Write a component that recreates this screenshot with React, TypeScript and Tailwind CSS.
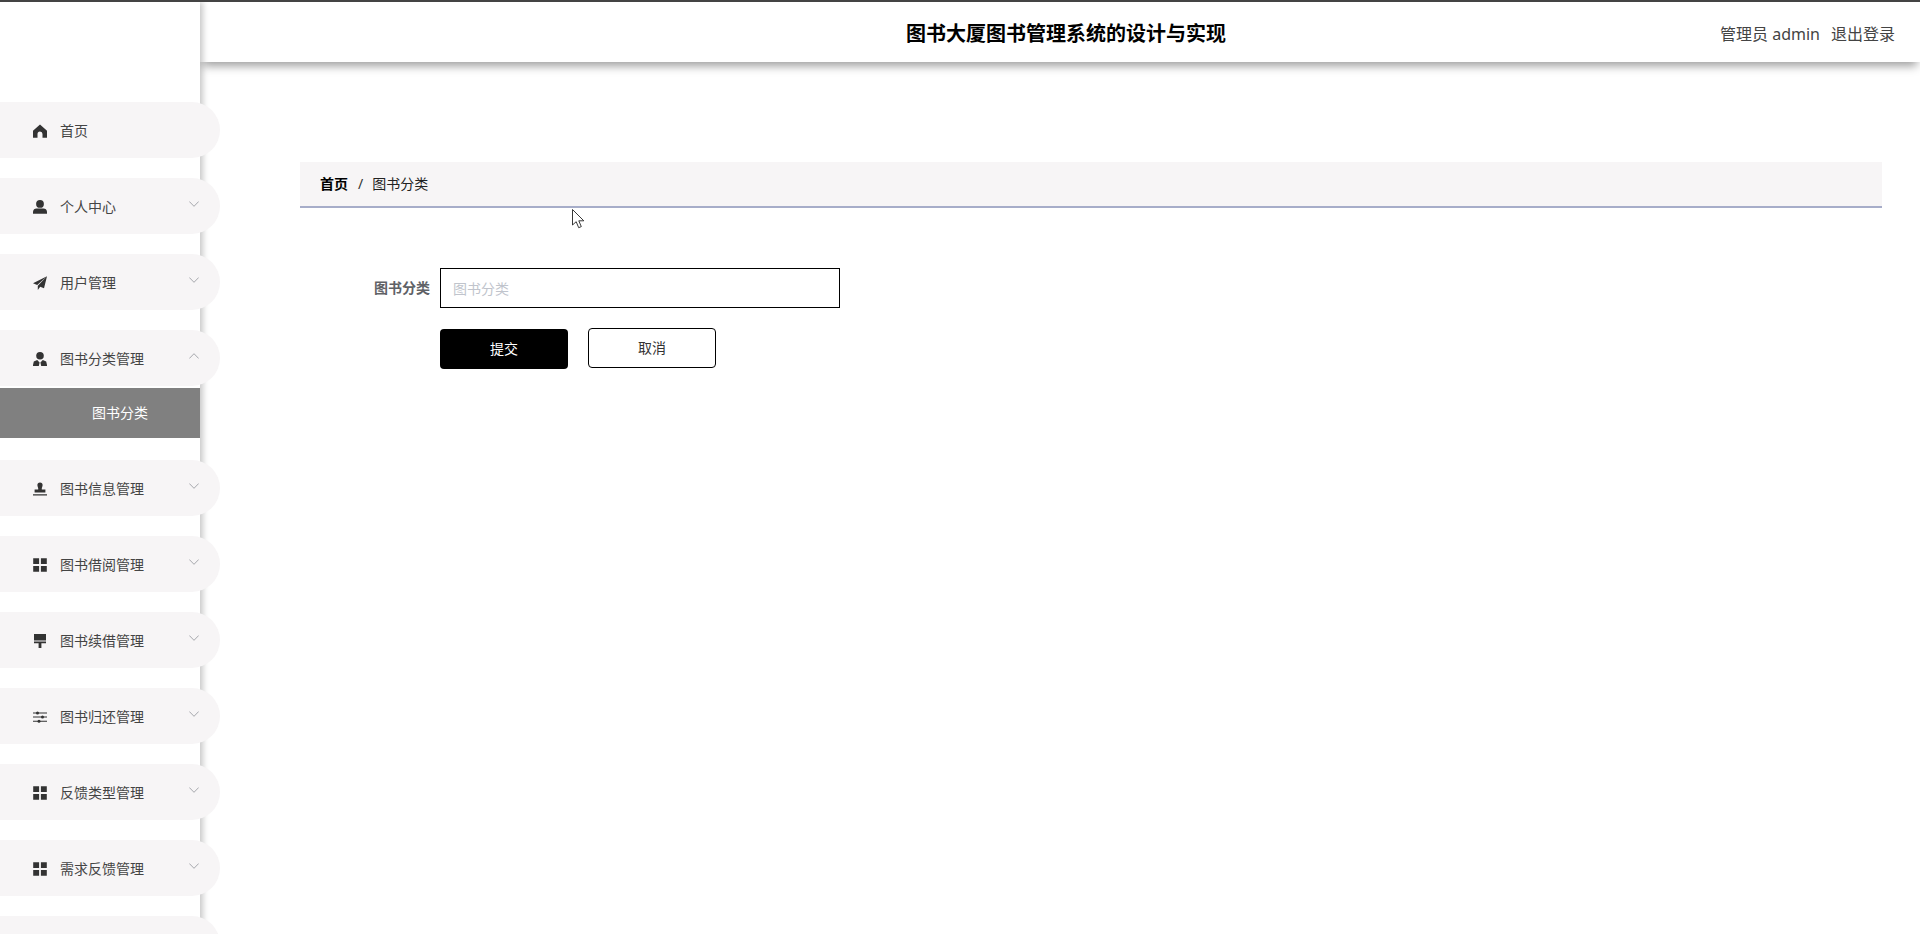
import type { ReactNode } from 'react'

const cjk = { fontFamily: '"Noto Sans", "Noto Sans CJK SC", sans-serif' }

const Svg = ({ children }: { children: ReactNode }) => (
  <svg viewBox="0 0 14 14" className="h-[14px] w-[14px] shrink-0 fill-[#333]">
    {children}
  </svg>
)

const HomeIcon = () => (
  <Svg>
    <path d="M7 .4 14 6.800V13.800H9.500V10a2.500 2.500 0 0 0-5 0v3.800H0V6.800z" />
  </Svg>
)
const UserIcon = () => (
  <Svg>
    <circle cx="7" cy="3.900" r="3.900" />
    <path d="M0 13.800v-2C0 9.600 1.800 8.400 3.400 8.400h7.200c1.600 0 3.400 1.200 3.400 3.400v2z" />
  </Svg>
)
const PlaneIcon = () => (
  <Svg>
    <path d="M14 .2 0 7.200l4.200 1.800zM14 .2 4.800 9.800V14l2.400-3.200 3.800 1.400z" />
  </Svg>
)
const CustomIcon = () => (
  <Svg>
    <circle cx="7" cy="3.800" r="3.800" />
    <path d="M4.200 8 .8 9.600-.2 14h6l.8-3.400zM9.800 8l3.400 1.600 1 4.400h-6l-.8-3.400z" />
  </Svg>
)
const StampIcon = () => (
  <Svg>
    <path d="M4.400 3a2.600 2.600 0 0 1 5.200 0c0 1.600-.8 2.400-.8 3.600v1h3.600V10.600H1.600V7.600h3.600v-1C5.200 5.400 4.400 4.600 4.400 3zM0 12.200h14v1.400H0z" />
  </Svg>
)
const GridIcon = () => (
  <Svg>
    <path d="M.2.200h5.900v5.900H.2zM7.900.2h5.900v5.900H7.900zM.2 7.900h5.900v5.900H.2zM7.900 7.900h5.900v5.900H7.900z" />
  </Svg>
)
const BrushIcon = () => (
  <Svg>
    <path d="M1 0h12v6.400H1zM1 7.400h12v1.800H8.400V14H5.600V9.200H1z" />
  </Svg>
)
const SlidersIcon = () => (
  <Svg>
    <path d="M0 2.400h14v1H0zM0 6.600h14v1H0zM0 10.800h14v1H0z" />
    <circle cx="4.500" cy="2.900" r="1.500" />
    <circle cx="9.500" cy="7.100" r="1.500" />
    <circle cx="6" cy="11.300" r="1.500" />
  </Svg>
)

const Chevron = ({ up }: { up?: boolean }) => (
  <svg viewBox="0 0 10 6" className="-mt-[7px] ml-auto h-[6px] w-[10px] fill-none stroke-[#909399] stroke-[0.8]">
    <path d={up ? 'M.3 5.500 5 .7l4.700 4.800' : 'M.3.500 5 5.300 9.700.5'} />
  </svg>
)

const menu = [
  { label: '首页', icon: <HomeIcon />, plain: true },
  { label: '个人中心', icon: <UserIcon /> },
  { label: '用户管理', icon: <PlaneIcon /> },
  { label: '图书分类管理', icon: <CustomIcon />, open: true, children: ['图书分类'] },
  { label: '图书信息管理', icon: <StampIcon /> },
  { label: '图书借阅管理', icon: <GridIcon /> },
  { label: '图书续借管理', icon: <BrushIcon /> },
  { label: '图书归还管理', icon: <SlidersIcon /> },
  { label: '反馈类型管理', icon: <GridIcon /> },
  { label: '需求反馈管理', icon: <GridIcon /> },
]

const Sidebar = () => (
  <aside className="relative z-10 h-full w-[200px] shrink-0 bg-white pt-[100px] shadow-[3px_0_6px_rgba(0,0,0,0.22)]">
    {menu.map((item) => (
      <div key={item.label} className="mb-5 flex flex-col">
        <div className="flex h-[56px] w-[220px] items-center rounded-r-[28px] bg-[#f7f5f6] pl-[33px] pr-[21px] pt-[2px] text-sm text-[#444]">
          {item.icon}
          <span className="ml-[13px]">{item.label}</span>
          {!item.plain && <Chevron up={item.open} />}
        </div>
        {item.children?.map((child) => (
          <div
            key={child}
            className="mb-[2px] mt-[2px] flex h-[50px] items-center bg-[#808080] pl-[92px] text-sm text-white"
          >
            {child}
          </div>
        ))}
      </div>
    ))}
    {/* next group, cut off by the window */}
    <div className="h-[56px] w-[220px] rounded-r-[28px] bg-[#f7f5f6]" />
  </aside>
)

const Header = () => (
  <header className="flex h-[60px] shrink-0 items-center bg-white pl-[212px] pr-[25px] pt-[3px] shadow-[0_7px_9px_-3px_rgba(0,0,0,0.38)]">
    <h1 className="flex-1 text-center text-xl font-bold text-black">图书大厦图书管理系统的设计与实现</h1>
    <div className="flex w-[175px] justify-between text-base text-[#444]">
      <span>管理员 admin</span>
      <span>退出登录</span>
    </div>
  </header>
)

const Cursor = () => (
  <svg viewBox="0 0 13 20" className="absolute left-[372px] top-[47px] h-5 w-[13px]">
    <path d="M.5.500v15.500l3.700-3.300 2.500 6 2.600-1.100-2.500-5.800h5z" fill="#fff" stroke="#222" strokeWidth="0.9" />
  </svg>
)

const App = () => {
  return (
    <div className="flex h-[934px] overflow-hidden border-t-2 border-[#444] bg-white" style={cjk}>
      <Sidebar />
      <div className="flex min-w-0 flex-1 flex-col">
        <Header />
        <main className="relative mt-[100px] flex-1 pl-[100px] pr-[38px]">
          {/* breadcrumb */}
          <div className="flex h-[46px] items-center border-b-2 border-[#a7adc9] bg-[#f7f5f6] px-5 text-sm">
            <span className="font-bold text-black">首页</span>
            <span className="ml-[10px] mr-[9px] text-[#333]">/</span>
            <span className="text-[#222]">图书分类</span>
          </div>
          <Cursor />
          {/* form */}
          <div className="mt-[60px] flex items-center">
            <label className="w-[140px] pr-2.5 text-right text-sm font-bold text-[#606266]">图书分类</label>
            <input
              placeholder="图书分类"
              className="h-10 w-[400px] border border-black bg-white px-3 text-sm outline-none placeholder:text-[#c0c4cc]"
            />
          </div>
          <div className="ml-[140px] mt-5 flex items-start gap-5">
            <button className="mt-px h-10 w-[128px] rounded bg-black text-sm text-white">提交</button>
            <button className="h-10 w-[128px] rounded border border-black bg-white text-sm text-[#333]">取消</button>
          </div>
        </main>
      </div>
    </div>
  )
}

export default App
